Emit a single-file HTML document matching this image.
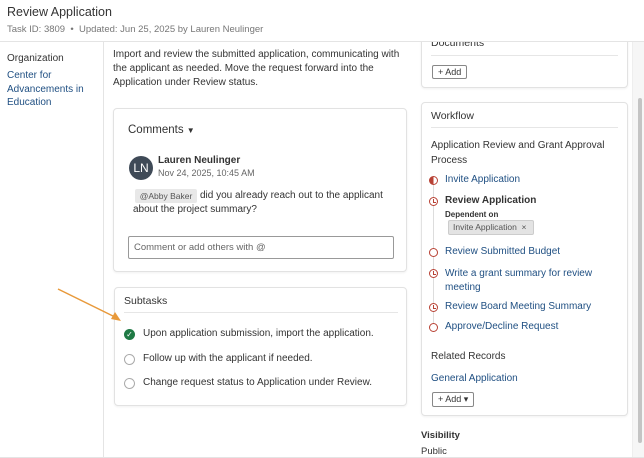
<!DOCTYPE html>
<html><head><style>
*{margin:0;padding:0;box-sizing:border-box}
body{width:644px;height:458px;overflow:hidden;background:#fff;font-family:"Liberation Sans",sans-serif;color:#333;position:relative;font-size:10px}
.a{position:absolute}
.link{color:#1f4f82}
.card{position:absolute;border:1px solid #e2e2e2;border-radius:4px;background:#fff;box-shadow:0 1px 2px rgba(0,0,0,.06)}
.btn{position:absolute;border:1px solid #888;border-radius:2px;font-size:9px;color:#333;padding:1px 5px;background:#fff}
.ic{position:absolute;width:9px;height:9px;border:1.3px solid #b84235;border-radius:50%}
.clk::after{content:"";position:absolute;left:2.5px;top:1px;width:2px;height:2.5px;border-left:1px solid #b84235;border-bottom:1px solid #b84235}
.cb{position:absolute;width:11px;height:11px;border:1px solid #aaa;border-radius:50%}
</style></head><body>
<div class="a" style="left:7px;top:5px;font-size:12.5px;color:#333">Review Application</div>
<div class="a" style="left:7px;top:24px;font-size:9.5px;color:#777">Task ID: 3809 &nbsp;•&nbsp; Updated: Jun 25, 2025 by Lauren Neulinger</div>
<div class="a" style="left:624px;top:3px;font-size:14px;color:#888">×</div>
<div class="a" style="left:0;top:41px;width:644px;height:1px;background:#e4e4e4"></div>
<div class="a" style="left:103px;top:42px;width:1px;height:416px;background:#e4e4e4"></div>
<div class="a" style="left:7px;top:53px;font-size:10px;color:#333">Organization</div>
<div class="a link" style="left:7px;top:69px;font-size:10px;line-height:13.5px">Center for<br>Advancements in<br>Education</div>
<div class="a" style="left:113px;top:48px;font-size:10px;line-height:14px;width:290px;color:#333">Import and review the submitted application, communicating with the applicant as needed. Move the request forward into the Application under Review status.</div>

<div class="card" style="left:113px;top:108px;width:294px;height:164px">
<div class="a" style="left:14px;top:15px;font-size:11.5px;color:#333">Comments <span style="font-size:8px">▼</span></div>
<div class="a" style="left:15px;top:47px;width:24px;height:24px;border-radius:50%;background:#3f4a57;color:#fff;font-size:12px;text-align:center;line-height:24px">LN</div>
<div class="a" style="left:44px;top:46px;font-size:10px;font-weight:bold;color:#333">Lauren Neulinger</div>
<div class="a" style="left:44px;top:59px;font-size:9px;color:#666">Nov 24, 2025, 10:45 AM</div>
<div class="a" style="left:21px;top:80px;width:62px;height:14px;background:#e8e8e8;border-radius:2px;font-size:8.5px;color:#555;text-align:center;line-height:14px">@Abby Baker</div>
<div class="a" style="left:86px;top:81px;font-size:10px;color:#333">did you already reach out to the applicant</div>
<div class="a" style="left:19px;top:95px;font-size:10px;color:#333">about the project summary?</div>
<div class="a" style="left:14px;top:127px;width:266px;height:23px;border:1px solid #999;border-radius:2px;font-size:9.5px;color:#666;padding:5px 5px">Comment or add others with @</div>
</div>

<div class="card" style="left:114px;top:287px;width:293px;height:119px">
<div class="a" style="left:9px;top:7px;font-size:10.5px;color:#333">Subtasks</div>
<div class="a" style="left:9px;top:24px;width:274px;height:1px;background:#e6e6e6"></div>
<div class="a" style="left:9px;top:41px;width:11px;height:11px;border-radius:50%;background:#1f7a45;color:#fff;font-size:8px;text-align:center;line-height:11px">✓</div>
<div class="a" style="left:28px;top:40px;font-size:10px">Upon application submission, import the application.</div>
<div class="cb" style="left:9px;top:66px"></div>
<div class="a" style="left:28px;top:65px;font-size:10px">Follow up with the applicant if needed.</div>
<div class="cb" style="left:9px;top:90px"></div>
<div class="a" style="left:28px;top:89px;font-size:10px">Change request status to Application under Review.</div>
</div>

<svg class="a" style="left:55px;top:285px" width="70" height="40"><line x1="3" y1="4" x2="62" y2="33" stroke="#e8993a" stroke-width="1.5"/><polygon points="66,36 56,34 60,27" fill="#e8993a"/></svg>

<div class="card" style="left:421px;top:20px;width:207px;height:68px">
<div class="a" style="left:9px;top:16px;font-size:10.5px;color:#333">Documents</div>
<div class="a" style="left:9px;top:34px;width:187px;height:1px;background:#e6e6e6"></div>
<div class="btn" style="left:10px;top:44px">+ Add</div>
</div>
<div class="a" style="left:410px;top:0;width:222px;height:41px;background:#fff"></div>
<div class="a" style="left:410px;top:41px;width:222px;height:1px;background:#e4e4e4"></div>

<div class="card" style="left:421px;top:102px;width:207px;height:314px">
<div class="a" style="left:9px;top:7px;font-size:10.5px">Workflow</div>
<div class="a" style="left:9px;top:24px;width:187px;height:1px;background:#e6e6e6"></div>
<div class="a" style="left:9px;top:35px;font-size:10px;line-height:15px;color:#333">Application Review and Grant Approval<br>Process</div>
<div class="a" style="left:11px;top:80px;width:1px;height:148px;background:#ddd"></div>
<div class="ic" style="left:7px;top:73px;background:linear-gradient(90deg,#b84235 50%,#fff 50%)"></div>
<div class="a link" style="left:23px;top:71px;font-size:10px">Invite Application</div>
<div class="ic clk" style="left:7px;top:94px;background:#fff"></div>
<div class="a" style="left:23px;top:92px;font-size:10px;font-weight:bold">Review Application</div>
<div class="a" style="left:23px;top:107px;font-size:8px;font-weight:bold">Dependent on</div>
<div class="a" style="left:26px;top:117px;width:86px;height:15px;background:#e3e3e3;border:1px solid #ccc;border-radius:2px;font-size:8.5px;color:#555;line-height:13px;padding-left:4px">Invite Application &nbsp;×</div>
<div class="ic" style="left:7px;top:145px;background:#fff"></div>
<div class="a link" style="left:23px;top:143px;font-size:10px">Review Submitted Budget</div>
<div class="ic clk" style="left:7px;top:166px;background:#fff"></div>
<div class="a link" style="left:23px;top:164px;font-size:10px;line-height:14px">Write a grant summary for review<br>meeting</div>
<div class="ic clk" style="left:7px;top:200px;background:#fff"></div>
<div class="a link" style="left:23px;top:198px;font-size:10px">Review Board Meeting Summary</div>
<div class="ic" style="left:7px;top:220px;background:#fff"></div>
<div class="a link" style="left:23px;top:218px;font-size:10px">Approve/Decline Request</div>
<div class="a" style="left:9px;top:248px;font-size:10px">Related Records</div>
<div class="a link" style="left:9px;top:270px;font-size:10px">General Application</div>
<div class="btn" style="left:10px;top:289px">+ Add ▾</div>
</div>
<div class="a" style="left:421px;top:430px;font-size:9.5px;font-weight:bold;color:#333">Visibility</div>
<div class="a" style="left:421px;top:446px;font-size:9.5px;color:#333">Public</div>
<div class="a" style="left:632px;top:42px;width:12px;height:416px;background:#f6f6f6;border-left:1px solid #eee"></div>
<div class="a" style="left:638px;top:98px;width:4px;height:345px;background:#c4c4c4;border-radius:2px"></div>
<div class="a" style="left:0;top:457px;width:644px;height:1px;background:#e4e4e4"></div>
</body></html>
